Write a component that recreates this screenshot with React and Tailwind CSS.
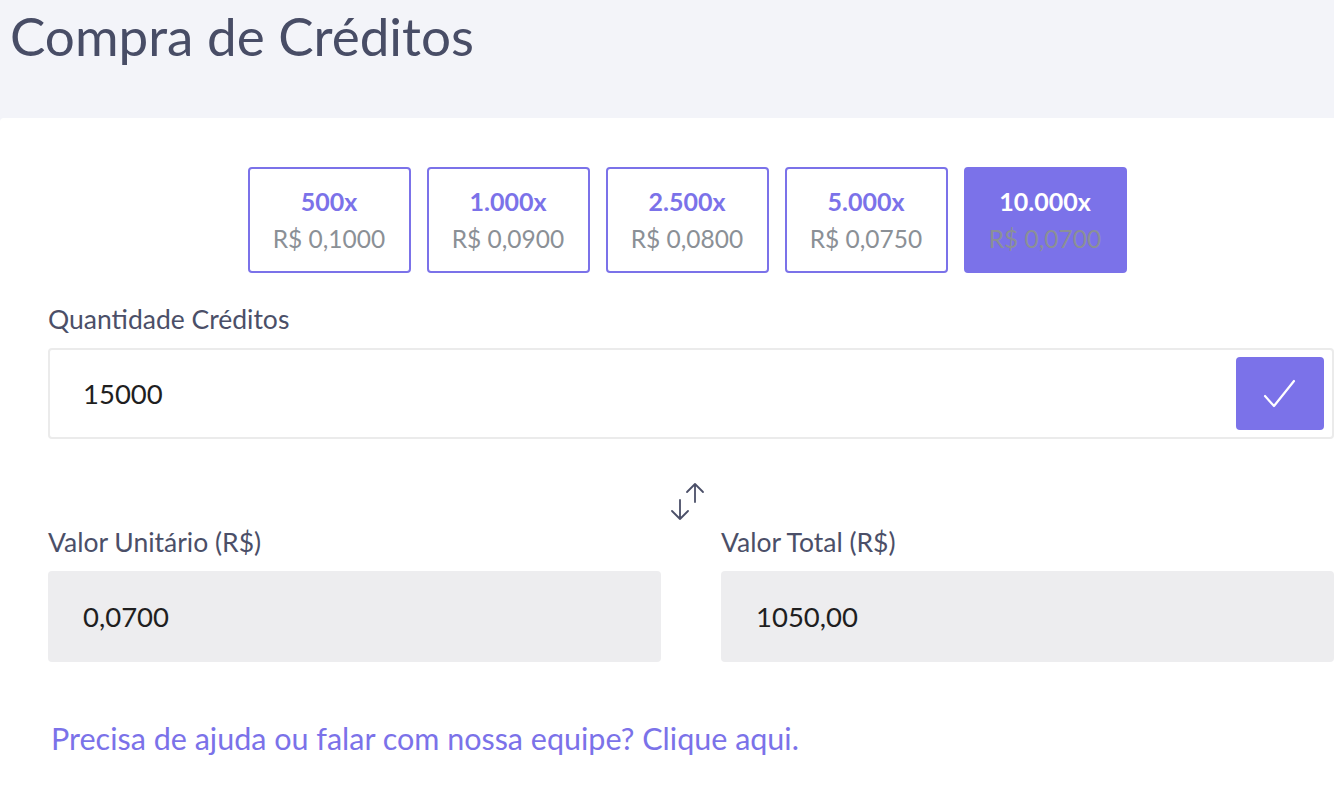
import React, { useState } from 'react';

const packages = [
  { qty: '500x', price: 'R$ 0,1000' },
  { qty: '1.000x', price: 'R$ 0,0900' },
  { qty: '2.500x', price: 'R$ 0,0800' },
  { qty: '5.000x', price: 'R$ 0,0750' },
  { qty: '10.000x', price: 'R$ 0,0700' },
];

const font = { fontFamily: 'Lato, "Noto Sans", sans-serif' };

const App = () => {
  const [selected, setSelected] = useState(4);

  return (
    <div className="min-h-screen bg-[#f3f4f9]" style={font}>
      {/* Header */}
      <div className="h-[118px] pl-[10px]">
        <h1 className="text-[53px] leading-[72px] text-[#484d66] font-normal">Compra de Créditos</h1>
      </div>

      {/* Card */}
      <div className="bg-white rounded-tl-[4px] pl-12 pt-[49px] pb-12 min-h-[680px]">
        {/* Package options */}
        <div className="flex justify-center gap-4 pr-[8px]">
          {packages.map((p, i) => {
            const active = i === selected;
            return (
              <button
                key={p.qty}
                onClick={() => setSelected(i)}
                className={`w-[163px] h-[106px] rounded-[4px] border-2 border-[#7b72e9] flex flex-col items-center justify-center ${
                  active ? 'bg-[#7b72e9]' : 'bg-white'
                }`}
              >
                <span className={`text-[25px] leading-[38px] font-bold ${active ? 'text-white' : 'text-[#7b72e9]'}`}>{p.qty}</span>
                <span className="text-[24.5px] leading-[38px] text-[#8b9096]">{p.price}</span>
              </button>
            );
          })}
        </div>

        {/* Quantidade */}
        <label className="block mt-[27px] text-[26.5px] leading-[38px] text-[#4b4f68]">Quantidade Créditos</label>
        <div className="mt-[10px] h-[91px] border-2 border-[#ebebeb] rounded-[4px] flex items-center pl-[33px] pr-[8px]">
          <span className="flex-1 text-[27.5px] text-[#1f1f1f]">15000</span>
          <button className="w-[88px] h-[73px] rounded-[4px] bg-[#7b72e9] flex items-center justify-center">
            <svg width="36" height="32" viewBox="0 0 36 32" fill="none" stroke="white" strokeWidth="2.2" strokeLinecap="round" strokeLinejoin="round">
              <path d="M3 18 L12 28 L32 3" />
            </svg>
          </button>
        </div>

        {/* Swap icon */}
        <div className="flex justify-center mt-[43px] pr-[8px]">
          <svg width="40" height="40" viewBox="0 0 40 40" fill="none" stroke="#4b4f68" strokeWidth="1.8" strokeLinecap="round" strokeLinejoin="round">
            <path d="M13 18 V37 M5 29 L13 37 L21 29" />
            <path d="M28 20 V2 M20 10 L28 2 L36 10" />
          </svg>
        </div>

        {/* Values */}
        <div className="grid grid-cols-2 gap-[60px] mt-[1px]">
          <div>
            <label className="block text-[26.5px] leading-[38px] text-[#4b4f68]">Valor Unitário (R$)</label>
            <div className="mt-[10px] h-[91px] bg-[#ededef] rounded-[4px] flex items-center pl-[35px] text-[27.5px] text-[#1f1f1f]">0,0700</div>
          </div>
          <div>
            <label className="block text-[26.5px] leading-[38px] text-[#4b4f68]">Valor Total (R$)</label>
            <div className="mt-[10px] h-[91px] bg-[#ededef] rounded-[4px] flex items-center pl-[35px] text-[27.5px] text-[#1f1f1f]">1050,00</div>
          </div>
        </div>

        {/* Help link */}
        <a href="#" className="block mt-[56px] ml-[3px] text-[30.5px] leading-[40px] text-[#7b72e9]">
          Precisa de ajuda ou falar com nossa equipe? Clique aqui.
        </a>
      </div>
    </div>
  );
};

export default App;
